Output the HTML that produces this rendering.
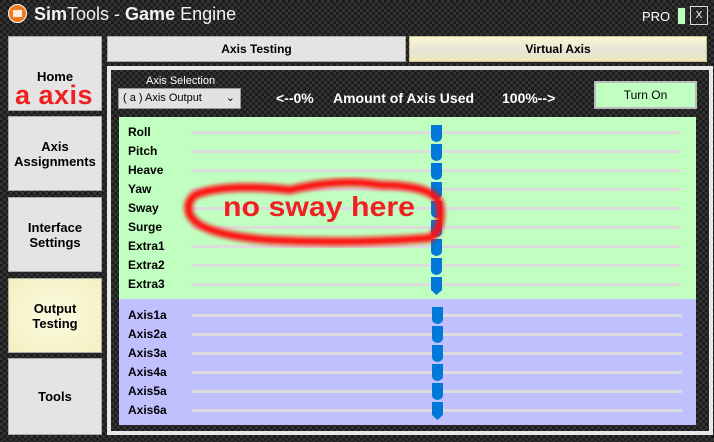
<!DOCTYPE html>
<html><head><meta charset="utf-8"><style>
*{margin:0;padding:0;box-sizing:border-box}
body{width:714px;height:442px;overflow:hidden;position:relative;font-family:"Liberation Sans",sans-serif;
background-color:#262626;background-image:repeating-conic-gradient(#333 0 25%,#1c1c1c 0 50%);background-size:6px 6px}
.a{position:absolute}
.nav{position:absolute;left:8px;width:94px;background:#e4e4e4;border:1px solid #aaa;display:flex;align-items:center;justify-content:center;text-align:center;font-weight:bold;font-size:13px;line-height:15px;color:#000}
.lbl{position:absolute;left:128px;font-size:12px;font-weight:bold;color:#000}
</style></head><body>
<svg class="a" style="left:8px;top:4px" width="19" height="19"><circle cx="9.5" cy="9.5" r="9" fill="#f07a20" stroke="#fff" stroke-width="1"/><rect x="5" y="6" width="9" height="7" fill="#fff" opacity=".85"/></svg>
<div class="a" style="left:34px;top:4px;font-size:18px;color:#f2f2f2"><b>Sim</b>Tools - <b>Game</b> Engine</div>
<div class="a" style="left:642px;top:9px;font-size:13px;color:#fff">PRO</div>
<div class="a" style="left:677px;top:7px;width:9px;height:18px;background:#c0ffc0;border:1px solid #333"></div>
<div class="a" style="left:690px;top:6px;width:18px;height:19px;border:1px solid #ddd;color:#fff;font-size:10px;text-align:center;line-height:17px">X</div>

<div class="nav" style="top:36px;height:75px;align-items:flex-start;padding-top:32px">Home</div>
<div class="a" style="left:15px;top:80px;font-size:27px;font-weight:bold;color:#ee2020;letter-spacing:0.5px">a axis</div>
<div class="nav" style="top:116px;height:75px">Axis<br>Assignments</div>
<div class="nav" style="top:197px;height:75px">Interface<br>Settings</div>
<div class="nav" style="top:278px;height:75px;background:radial-gradient(#fbfbe0,#f3f0c0)">Output<br>Testing</div>
<div class="nav" style="top:358px;height:77px">Tools</div>

<div class="a" style="left:107px;top:36px;width:299px;height:26px;background:#e4e4e4;border:1px solid #aaa;text-align:center;line-height:24px;font-size:12px;font-weight:bold">Axis Testing</div>
<div class="a" style="left:409px;top:36px;width:298px;height:26px;background:linear-gradient(#fbf8d0,#e4e4d8 60%,#efe9b8);border:1px solid #c8c090;text-align:center;line-height:24px;font-size:12px;font-weight:bold">Virtual Axis</div>

<div class="a" style="left:107px;top:66px;width:606px;height:369px;border:4px solid #e8e8e8"></div>
<div class="a" style="left:146px;top:75px;font-size:11px;color:#fff">Axis Selection</div>
<div class="a" style="left:118px;top:88px;width:123px;height:21px;background:#e2e2e2;border:1px solid #999;font-size:11px;line-height:19px;padding-left:4px">( a ) Axis Output<span style="position:absolute;right:5px;top:0">&#8964;</span></div>
<div class="a" style="left:276px;top:90px;font-size:14px;font-weight:bold;color:#fff">&lt;--0%</div>
<div class="a" style="left:333px;top:90px;font-size:14px;font-weight:bold;color:#fff">Amount of Axis Used</div>
<div class="a" style="left:502px;top:90px;font-size:14px;font-weight:bold;color:#fff">100%--&gt;</div>
<div class="a" style="left:594px;top:81px;width:103px;height:28px;background:#c0ffc0;border:2px solid #bbb;text-align:center;line-height:24px;font-size:12px">Turn On</div>

<div class="a" style="left:119px;top:117px;width:577px;height:182px;background:#c0ffc0"></div>
<div class="a" style="left:119px;top:299px;width:577px;height:126px;background:#c0c0ff"></div>

<div class="lbl" style="top:125px">Roll</div><div class="lbl" style="top:144px">Pitch</div><div class="lbl" style="top:163px">Heave</div>
<div class="lbl" style="top:182px">Yaw</div><div class="lbl" style="top:201px">Sway</div><div class="lbl" style="top:220px">Surge</div>
<div class="lbl" style="top:239px">Extra1</div><div class="lbl" style="top:258px">Extra2</div><div class="lbl" style="top:277px">Extra3</div>
<div class="lbl" style="top:308px">Axis1a</div><div class="lbl" style="top:327px">Axis2a</div><div class="lbl" style="top:346px">Axis3a</div>
<div class="lbl" style="top:365px">Axis4a</div><div class="lbl" style="top:384px">Axis5a</div><div class="lbl" style="top:403px">Axis6a</div>

<svg class="a" style="left:0;top:0" width="714" height="442">
<defs><path id="t1" d="M0 0h11v12q0 4-5.5 5q-5.5-1-5.5-5z" fill="#0078d7"/><path id="t2" d="M0 0h11v13l-5.5 5l-5.5-5z" fill="#0078d7"/>
<filter id="bl"><feGaussianBlur stdDeviation="2"/></filter></defs>
<g fill="#dcdcdc">
<rect x="191" y="131" width="490" height="3"/><rect x="191" y="150" width="490" height="3"/><rect x="191" y="169" width="490" height="3"/>
<rect x="191" y="188" width="490" height="3"/><rect x="191" y="207" width="490" height="3"/><rect x="191" y="226" width="490" height="3"/>
<rect x="191" y="245" width="490" height="3"/><rect x="191" y="264" width="490" height="3"/><rect x="191" y="283" width="490" height="3"/>
<rect x="192" y="314" width="490" height="3"/><rect x="192" y="333" width="490" height="3"/><rect x="192" y="352" width="490" height="3"/>
<rect x="192" y="371" width="490" height="3"/><rect x="192" y="390" width="490" height="3"/><rect x="192" y="409" width="490" height="3"/>
</g>
<use href="#t1" x="431" y="125"/><use href="#t1" x="431" y="144"/><use href="#t1" x="431" y="163"/><use href="#t1" x="431" y="182"/>
<use href="#t1" x="431" y="201"/><use href="#t1" x="431" y="220"/><use href="#t1" x="431" y="239"/><use href="#t1" x="431" y="258"/>
<use href="#t2" x="431" y="277"/>
<use href="#t1" x="432" y="307"/><use href="#t1" x="432" y="326"/><use href="#t1" x="432" y="345"/><use href="#t1" x="432" y="364"/>
<use href="#t1" x="432" y="383"/><use href="#t2" x="432" y="402"/>
<path d="M195 195q30-12 95-5q50-12 90-5q55 0 60 20q3 25-10 33q-80 6-160 2q-70-5-80-25q-5-12 5-20z" fill="none" stroke="#ff1010" stroke-width="8" filter="url(#bl)"/>
<text x="223" y="216" font-family="Liberation Sans,sans-serif" font-weight="bold" font-size="28" textLength="192" lengthAdjust="spacingAndGlyphs" fill="#ee2020">no sway here</text>
</svg>
</body></html>
